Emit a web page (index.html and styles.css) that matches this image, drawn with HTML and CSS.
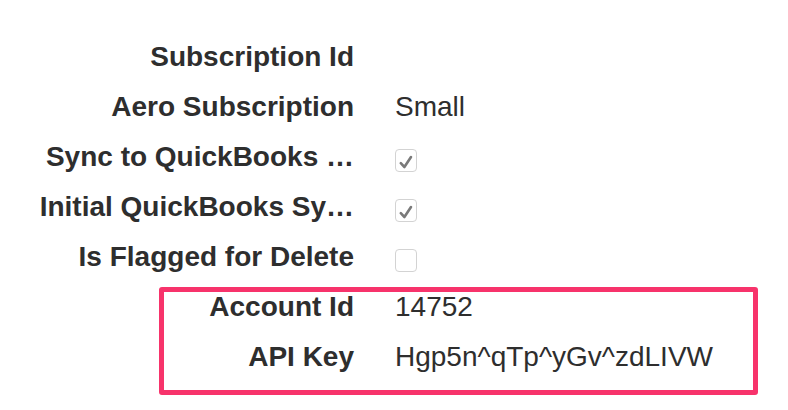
FILE: index.html
```html
<!DOCTYPE html>
<html lang="en">
<head>
    <meta charset="UTF-8">
    <title>Account Details</title>
    <link rel="stylesheet" href="styles.css">
</head>
<body>

    <div class="details">
        <div class="row">
            <div class="label">Subscription Id</div>
            <div class="value"></div>
        </div>
        <div class="row">
            <div class="label">Aero Subscription</div>
            <div class="value">Small</div>
        </div>
        <div class="row">
            <div class="label" title="Sync to QuickBooks Online">Sync to QuickBooks …</div>
            <div class="value">
                <span class="check">
                    <svg viewBox="0 0 22 23" width="22" height="23"><path d="M5.8 14.2 L9.4 18 L16 8" /></svg>
                </span>
            </div>
        </div>
        <div class="row">
            <div class="label" title="Initial QuickBooks Sync Complete">Initial QuickBooks Sy…</div>
            <div class="value">
                <span class="check">
                    <svg viewBox="0 0 22 23" width="22" height="23"><path d="M5.8 14.2 L9.4 18 L16 8" /></svg>
                </span>
            </div>
        </div>
        <div class="row">
            <div class="label">Is Flagged for Delete</div>
            <div class="value">
                <span class="check"></span>
            </div>
        </div>

        <!-- campos resaltados -->
        <div class="highlight">
            <div class="row">
                <div class="label">Account Id</div>
                <div class="value">14752</div>
            </div>
            <div class="row">
                <div class="label">API Key</div>
                <div class="value">Hgp5n^qTp^yGv^zdLIVW</div>
            </div>
        </div>
    </div>

</body>
</html>
```

FILE: styles.css
```css
body {
    margin: 0;
    font-family: "Liberation Sans", Arial, sans-serif;
    font-size: 28px;
    color: #2e2e2e;
    background: #fff;
}
.details {
    padding: 32px 0 28px;
}
.row {
    display: flex;
    align-items: flex-start;
    height: 50px;
    line-height: 50px;
}
.label {
    width: 354px;
    text-align: right;
    font-weight: bold;
    white-space: nowrap;
}
.value {
    margin-left: 41px;
    white-space: nowrap;
}
.check {
    display: block;
    width: 22px;
    height: 23px;
    margin-top: 17px;
    box-sizing: border-box;
    border: 1px solid #d3d3d3;
    border-radius: 4px;
    background: #fff;
}
.check svg {
    display: block;
    margin: -1px;
    fill: none;
    stroke: #7a7a7a;
    stroke-width: 2.6;
    stroke-linecap: round;
    stroke-linejoin: round;
}
.highlight {
    position: relative;
}
/* marco rosa encima de los campos */
.highlight::before {
    content: "";
    position: absolute;
    left: 159px;
    top: 5px;
    width: 599px;
    height: 108px;
    box-sizing: border-box;
    border: 5px solid #f7336b;
    border-radius: 3px;
}
```
